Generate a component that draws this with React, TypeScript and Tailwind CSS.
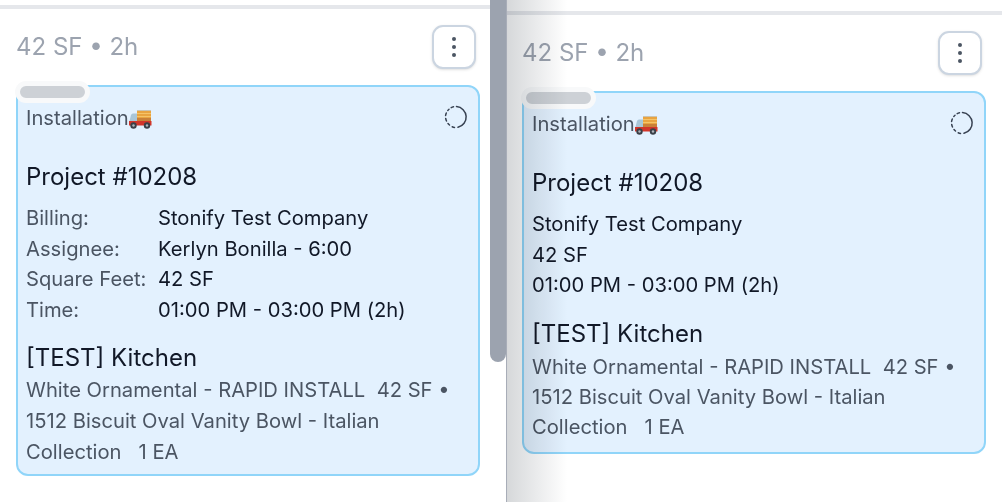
const Truck = () => (
  <svg width="24" height="21" viewBox="0 0 24 21" className="shrink-0 -ml-[1px]">
    <rect x="9" y="2" width="14" height="12" fill="#e9a440" />
    <rect x="9" y="2" width="14" height="1" fill="#c9c4b4" />
    <rect x="9" y="5" width="14" height="1" fill="#f5c469" />
    <rect x="9" y="8" width="14" height="1" fill="#f5c469" />
    <rect x="9" y="10" width="14" height="3" fill="#c98038" />
    <path d="M1.500 13 L3 7 Q3.500 5.500 5 5.500 L9 5.500 L9 13 Z" fill="#a9c6d8" />
    <path d="M1 13 H23.500 V17.500 H1 Z" fill="#d2352a" />
    <circle cx="5.500" cy="17.500" r="3.200" fill="#3b4048" />
    <circle cx="5.500" cy="17.500" r="1.200" fill="#aeb4bb" />
    <circle cx="19" cy="17.500" r="3.200" fill="#3b4048" />
    <circle cx="19" cy="17.500" r="1.200" fill="#aeb4bb" />
  </svg>
);

const Dashed = () => (
  <svg width="24" height="24" viewBox="0 0 24 24" fill="none" stroke="#374151" strokeWidth="1.500" strokeLinecap="round" className="shrink-0 -mt-[1px] mr-[-1px]">
    <path d="M12.500 1.600 A10.500 10.500 0 0 1 14 22.300" />
    <path d="M10.500 22.400 A10.500 10.500 0 0 1 8.200 21.700" />
    <path d="M5.500 20 A10.500 10.500 0 0 1 4 18.500" />
    <path d="M2.500 16 A10.500 10.500 0 0 1 1.700 13.500" />
    <path d="M1.600 10.500 A10.500 10.500 0 0 1 2.300 8" />
    <path d="M3.800 5.500 A10.500 10.500 0 0 1 5 4.200" />
    <path d="M7.200 2.700 A10.500 10.500 0 0 1 9.500 1.800" />
  </svg>
);

const Header = ({ right }: { right: number }) => (
  <div className={`flex items-center justify-between h-[44px] mt-[16px] ${right === 14 ? "pl-[16px] pr-[14px]" : "pl-[15px] pr-[20px]"}`}>
    <span className="text-[24px] leading-[32px] -mt-[1px] text-[#9ca3af]">42 SF • 2h</span>
    <button className="w-[44px] h-[44px] rounded-[11px] border-2 border-[#cbd5e1] bg-white flex flex-col items-center justify-center gap-[4.500px] shadow-sm">
      <span className="w-[3.500px] h-[3.500px] rounded-full bg-[#4b5563]" />
      <span className="w-[3.500px] h-[3.500px] rounded-full bg-[#4b5563]" />
      <span className="w-[3.500px] h-[3.500px] rounded-full bg-[#4b5563]" />
    </button>
  </div>
);

const Card = ({ detailed }: { detailed: boolean }) => (
  <div className={`relative mt-[16px] w-[464px] rounded-[12px] border-2 border-[#90d5f9] bg-[#e3f1fe] pl-[8px] pr-[11px] pt-[19px] ${detailed ? "mx-[16px] pb-[8px]" : "mx-[15px] pb-[10px]"}`}>
    <div className="absolute left-[-3px] top-[-6px] w-[75px] h-[22px] rounded-full border-[5px] border-[#f8f9fa] bg-[#cdd1d6]" />
    <div className="flex items-start justify-between h-[24px]">
      <div className="flex items-center text-[20.200px] leading-[24px] text-[#4b5563]">
        Installation
        <Truck />
      </div>
      <Dashed />
    </div>
    <div className="mt-[31px] text-[24px] leading-[32px] text-[#111827]">Project #10208</div>
    {detailed ? (
      <div className="mt-[10px] grid grid-cols-[132px_1fr] text-[20.200px] leading-[30.500px]">
        <span className="text-[#4b5563]">Billing:</span><span className="text-[#111827]">Stonify Test Company</span>
        <span className="text-[#4b5563]">Assignee:</span><span className="text-[#111827]">Kerlyn Bonilla - 6:00</span>
        <span className="text-[#4b5563]">Square Feet:</span><span className="text-[#111827]">42 SF</span>
        <span className="text-[#4b5563]">Time:</span><span className="text-[#111827]">01:00 PM - 03:00 PM (2h)</span>
      </div>
    ) : (
      <div className="mt-[10px] flex flex-col text-[20.200px] leading-[30.500px] text-[#111827]">
        <span>Stonify Test Company</span>
        <span>42 SF</span>
        <span>01:00 PM - 03:00 PM (2h)</span>
      </div>
    )}
    <div className="mt-[17px] text-[24px] leading-[32px] text-[#111827]">[TEST] Kitchen</div>
    <div className={`text-[20.200px] text-[#4b5563] pr-[10px] ${detailed ? "leading-[30.800px] mt-[1px] -mb-[1px]" : "leading-[30px] mt-[2px]"}`}>
      White Ornamental - RAPID INSTALL&nbsp; 42 SF • 1512 Biscuit Oval Vanity Bowl - Italian Collection&nbsp;&nbsp;&nbsp;1 EA
    </div>
  </div>
);

export default function App() {
  return (
    <div className="flex w-[1002px] h-[502px] overflow-hidden bg-white font-['Inter',sans-serif]">
      <div className="w-[490px] shrink-0">
        <div className="h-[4px] mt-[5px] bg-[#e5e7eb]" />
        <Header right={14} />
        <Card detailed />
      </div>
      <div className="w-[16px] shrink-0 h-[362px] rounded-b-[8px] bg-[#9ca3af]" />
      <div className="relative flex-1 border-l border-[#a8adb8]">
        <div className="h-[4px] mt-[11px] bg-[#e5e7eb]" />
        <Header right={20} />
        <Card detailed={false} />
        <div className="absolute inset-y-0 left-0 w-[60px] pointer-events-none mix-blend-multiply bg-gradient-to-r from-[#d6d8da] to-white" />
      </div>
    </div>
  );
}
